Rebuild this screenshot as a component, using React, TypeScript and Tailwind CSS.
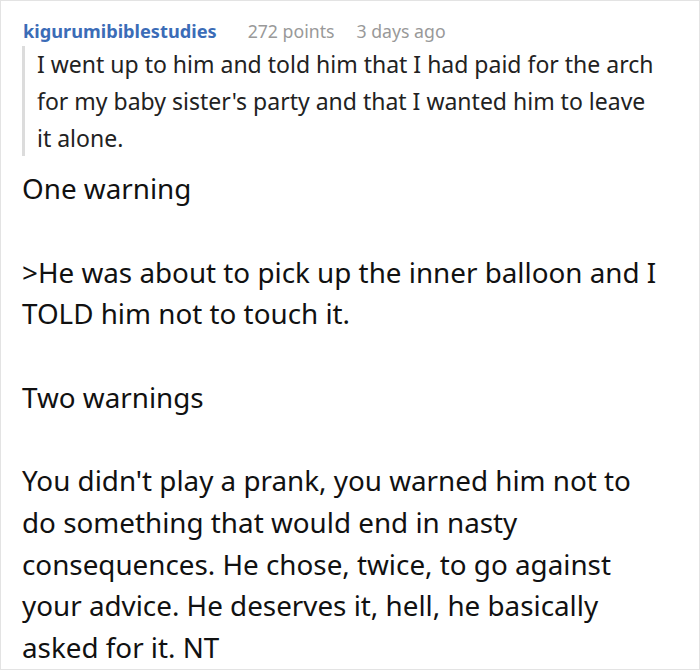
export default function App() {
  const font = { fontFamily: '"Noto Sans", "Open Sans", sans-serif' };
  return (
    <div className="w-[700px] h-[670px] overflow-hidden bg-white border border-[#e3e3e3]" style={font}>
      <div className="pl-[21px] pt-[17px] w-[663px]">
        {/* header */}
        <div className="flex items-baseline h-[26px]">
          <span className="text-[18.2px] font-bold text-[#3b6cb7] leading-[26px] ml-[1px]">kigurumibiblestudies</span>
          <span className="text-[17.7px] text-[#999999] leading-[26px] ml-[31px]">272 points</span>
          <span className="text-[17.7px] text-[#999999] leading-[26px] ml-[22px]">3 days ago</span>
        </div>

        {/* quote */}
        <blockquote className="mt-[2px] mr-[4px] border-l-[3px] border-[#dcdcdc] pl-[12px] text-[23px] leading-[36.8px] text-[#222222]">
          I went up to him and told him that I had paid for the arch for my baby sister's party and that I wanted him to leave it alone.
        </blockquote>

        {/* body */}
        <div className="mt-[12px] text-[27.8px] leading-[41.7px] text-[#111111]">
          <p>One warning</p>
          <p className="mt-[41.7px]">&gt;He was about to pick up the inner balloon and I TOLD him not to touch it.</p>
          <p className="mt-[41.7px]">Two warnings</p>
          <p className="mt-[41.7px]">
            You didn't play a prank, you warned him not to do something that would end in nasty consequences. He chose, twice, to go against your advice. He deserves it, hell, he basically asked for it. NT
          </p>
        </div>
      </div>
    </div>
  );
}
